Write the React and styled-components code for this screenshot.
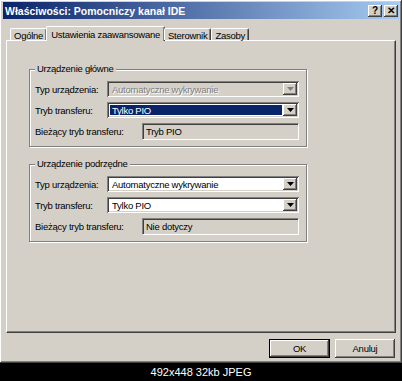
import React from 'react'
import styled, { createGlobalStyle } from 'styled-components'

const GlobalStyle = createGlobalStyle`
  html, body {
    margin: 0;
    padding: 0;
    background: #000;
  }
  body {
    font-family: "Liberation Sans", Arial, sans-serif;
    font-size: 9.5px;
    letter-spacing: -0.25px;
    color: #000;
  }
`

const raised = `
  box-shadow: inset -1px -1px #404040, inset 1px 1px #fff,
    inset -2px -2px #808080, inset 2px 2px #d4d0c8;
`

const sunken = `
  box-shadow: inset 1px 1px #808080, inset -1px -1px #fff,
    inset 2px 2px #404040, inset -2px -2px #d4d0c8;
`

const Screen = styled.div`
  width: 402px;
  height: 381px;
  display: flex;
  flex-direction: column;
  background: #000;
`

const Window = styled.div`
  height: 363px;
  box-sizing: border-box;
  background: #d4d0c8;
  padding: 2px 3px 3px;
  display: flex;
  flex-direction: column;
  ${raised}
`

const TitleBar = styled.div`
  height: 17px;
  display: flex;
  align-items: center;
  justify-content: space-between;
  padding: 0 1px 0 2px;
  background: linear-gradient(to right, #0a246a, #a6caf0);
`

const Title = styled.span`
  color: #fff;
  font-weight: bold;
  font-size: 10.5px;
  letter-spacing: 0;
`

const CaptionButtons = styled.div`
  display: flex;
  gap: 2px;
`

const CaptionButton = styled.span`
  width: 14px;
  height: 12px;
  display: flex;
  align-items: center;
  justify-content: center;
  background: #d4d0c8;
  font-weight: bold;
  font-size: 10px;
  line-height: 1;
  letter-spacing: 0;
  ${raised}
`

const Body = styled.div`
  flex: 1;
  display: flex;
  flex-direction: column;
  padding: 7px 3px 0;
`

const TabRow = styled.div`
  height: 14px;
  display: flex;
  align-items: flex-end;
  padding-left: 4px;
  position: relative;
  z-index: 1;
`

const Tab = styled.div`
  height: ${p => (p.$active ? '15px' : '12px')};
  box-sizing: border-box;
  padding: 0 ${p => (p.$active ? '4px' : '3px')};
  margin: 0 ${p => (p.$active ? '-1px' : '0')};
  margin-bottom: ${p => (p.$active ? '-1px' : '0')};
  display: flex;
  align-items: center;
  padding-top: ${p => (p.$active ? '0' : '1px')};
  background: #d4d0c8;
  border-top: 1px solid #fff;
  border-left: 1px solid #fff;
  border-right: 1px solid #404040;
  box-shadow: inset -1px 0 #808080;
  border-radius: 2px 2px 0 0;
  white-space: nowrap;
`

const Panel = styled.div`
  height: 293px;
  box-sizing: border-box;
  padding: 28px 0 0 22px;
  border-top: 1px solid #fff;
  border-left: 1px solid #fff;
  border-right: 1px solid #404040;
  border-bottom: 1px solid #404040;
  box-shadow: inset -1px -1px #808080;
`

const Group = styled.div`
  position: relative;
  width: 278px;
  box-sizing: border-box;
  margin-top: ${p => p.$gap || 0}px;
  padding: 11px 7px 6px 5px;
  display: flex;
  flex-direction: column;
  gap: 5px;
  border: 1px solid #808080;
  box-shadow: 1px 1px #fff, inset 1px 1px #fff;
`

const Legend = styled.span`
  position: absolute;
  top: -7px;
  left: 5px;
  padding: 0 2px;
  background: #d4d0c8;
`

const Row = styled.div`
  display: flex;
  align-items: center;
  justify-content: space-between;
`

const Label = styled.span``

const Combo = styled.div`
  width: ${p => p.$width}px;
  height: 16px;
  box-sizing: border-box;
  padding: 2px;
  display: flex;
  background: ${p => (p.$disabled ? '#d4d0c8' : '#fff')};
  ${sunken}
`

const ComboValue = styled.span`
  flex: 1;
  display: flex;
  align-items: center;
  margin: 1px;
  padding-left: 2px;
  background: ${p => (p.$selected ? '#0a246a' : 'transparent')};
  color: ${p => (p.$selected ? '#fff' : p.$disabled ? '#808080' : '#000')};
  ${p => p.$disabled && 'text-shadow: 1px 1px #fff;'}
`

const DropButton = styled.span`
  width: 14px;
  display: flex;
  align-items: center;
  justify-content: center;
  background: #d4d0c8;
  ${raised}
`

const Field = styled.div`
  width: ${p => p.$width}px;
  height: 17px;
  box-sizing: border-box;
  display: flex;
  align-items: center;
  padding-left: 3px;
  border: 1px solid;
  border-color: #808080 #fff #fff #808080;
  box-shadow: inset 1px 1px #404040;
`

const Footer = styled.div`
  display: flex;
  justify-content: flex-end;
  gap: 5px;
  margin-top: 6px;
  padding-right: 1px;
`

const Button = styled.div`
  width: ${p => (p.$default ? 61 : 60)}px;
  height: 19px;
  box-sizing: border-box;
  display: flex;
  align-items: center;
  justify-content: center;
  background: #d4d0c8;
  ${p => (p.$default ? 'border: 1px solid #000;' : '')}
  ${raised}
`

const Caption = styled.div`
  flex: 1;
  display: flex;
  align-items: center;
  justify-content: center;
  color: #fff;
  font-size: 11px;
  letter-spacing: 0;
`

const Arrow = ({ disabled }) => (
  <svg width="7" height="4" viewBox="0 0 7 4">
    <polygon points="0,0 7,0 3.5,4" fill={disabled ? '#808080' : '#000'} />
  </svg>
)

const ComboBox = ({ width, value, disabled, selected }) => (
  <Combo $width={width} $disabled={disabled}>
    <ComboValue $disabled={disabled} $selected={selected}>{value}</ComboValue>
    <DropButton>
      <Arrow disabled={disabled} />
    </DropButton>
  </Combo>
)

const DeviceGroup = ({ title, type, typeDisabled, transfer, transferSelected, current, gap }) => (
  <Group $gap={gap}>
    <Legend>{title}</Legend>
    <Row>
      <Label>Typ urządzenia:</Label>
      <ComboBox width={192} value={type} disabled={typeDisabled} />
    </Row>
    <Row>
      <Label>Tryb transferu:</Label>
      <ComboBox width={192} value={transfer} selected={transferSelected} />
    </Row>
    <Row>
      <Label>Bieżący tryb transferu:</Label>
      <Field $width={157}>{current}</Field>
    </Row>
  </Group>
)

const App = () => {
  return (
    <Screen>
      <GlobalStyle />
      <Window>
        <TitleBar>
          <Title>Właściwości: Pomocniczy kanał IDE</Title>
          <CaptionButtons>
            <CaptionButton>?</CaptionButton>
            <CaptionButton>✕</CaptionButton>
          </CaptionButtons>
        </TitleBar>
        <Body>
          <TabRow>
            <Tab>Ogólne</Tab>
            <Tab $active>Ustawienia zaawansowane</Tab>
            <Tab>Sterownik</Tab>
            <Tab>Zasoby</Tab>
          </TabRow>
          <Panel>
            <DeviceGroup
              title="Urządzenie główne"
              type="Automatyczne wykrywanie"
              typeDisabled
              transfer="Tylko PIO"
              transferSelected
              current="Tryb PIO"
            />
            <DeviceGroup
              gap={17}
              title="Urządzenie podrzędne"
              type="Automatyczne wykrywanie"
              transfer="Tylko PIO"
              current="Nie dotyczy"
            />
          </Panel>
          <Footer>
            <Button $default>OK</Button>
            <Button>Anuluj</Button>
          </Footer>
        </Body>
      </Window>
      <Caption>492x448 32kb JPEG</Caption>
    </Screen>
  )
}

export default App
